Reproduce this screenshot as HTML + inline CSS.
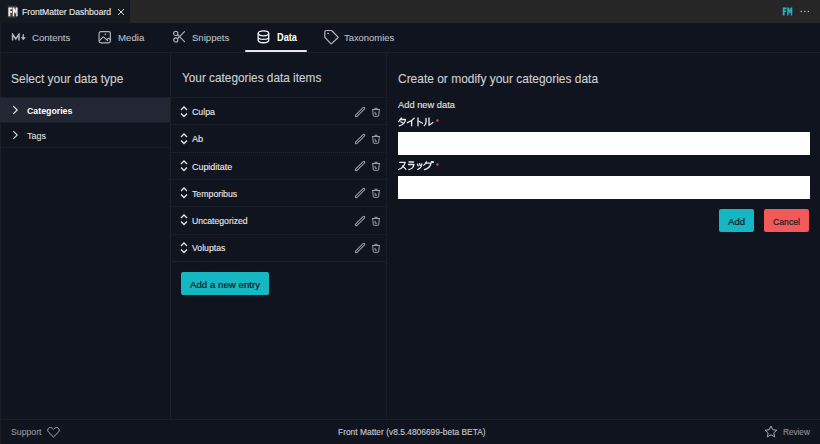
<!DOCTYPE html>
<html><head><meta charset="utf-8"><style>
html,body{margin:0;padding:0;}
body{width:820px;height:444px;background:#10141f;position:relative;overflow:hidden;font-family:"Liberation Sans",sans-serif;}
.t{position:absolute;white-space:nowrap;}
.r{position:absolute;}
</style></head><body>
<div class="r" style="left:0px;top:23px;width:1px;height:421px;background:#1b1d24;"></div>
<div class="r" style="left:0px;top:0px;width:820px;height:23px;background:#262626;"></div>
<div class="r" style="left:0px;top:0px;width:130px;height:23px;background:#14181f;"></div>
<svg class="r" style="left:7px;top:5px;" width="11" height="14" viewBox="0 0 11 14" fill="none"><rect x="0.8" y="0.8" width="9.4" height="12" fill="#3e3a3d"/><path d="M1.4 2.6H5.2V4.3H3.3V6.1H5V7.7H3.3V11.2H1.4Z M5.7 2.6H7.5L8.2 5.6L8.9 2.6H10.6V11.2H9.2V6.3L8.6 8.6H7.8L7.1 6.3V11.2H5.7Z" fill="#eeeeee"/></svg>
<svg class="r" style="left:117px;top:8px;" width="8" height="8" viewBox="0 0 8 8" fill="none"><path d="M1 1L7 7M7 1L1 7" stroke="#d6d6d6" stroke-width="1"/></svg>
<svg class="r" style="left:782px;top:7px;" width="11" height="9" viewBox="0 0 11 9" fill="none"><path d="M0.8 0.6H4.5V2.2H2.6V3.6H4.2V5.1H2.6V8.5H0.8Z M5.2 0.6H7L7.8 3.5L8.6 0.6H10.3V8.5H8.9V4.2L8.2 6.5H7.4L6.6 4.2V8.5H5.2Z" fill="#1bb6c2"/></svg>
<svg class="r" style="left:800px;top:10px;" width="10" height="3" viewBox="0 0 10 3" fill="none"><circle cx="1.3" cy="1.5" r="0.75" fill="#c0c0c0"/><circle cx="4.8" cy="1.5" r="0.75" fill="#c0c0c0"/><circle cx="8.3" cy="1.5" r="0.75" fill="#c0c0c0"/></svg>
<div class="r" style="left:0px;top:52px;width:820px;height:1px;background:#1c1f28;"></div>
<svg class="r" style="left:11px;top:33px;" width="16" height="9" viewBox="0 0 16 9" fill="none"><path d="M1.6 7.6V1.3L4.8 6L8 1.3V7.6" stroke="#b4b7bd" stroke-width="1.5" stroke-linejoin="miter"/><path d="M11.6 1.2H13V4.2H14.9L12.3 7.3L9.7 4.2H11.6Z" fill="#b4b7bd"/></svg>
<svg class="r" style="left:98px;top:30px;" width="14" height="14" viewBox="0 0 14 14" fill="none"><rect x="1.05" y="1.55" width="11.3" height="11.3" rx="1.8" stroke="#b4b7bd" stroke-width="1.15"/><path d="M1.5 10.6L4.9 7.1Q5.4 6.6 5.9 7.1L9.6 10.6M8.9 9.6L10.1 8.5Q10.6 8.1 11.1 8.5L12.4 9.7" stroke="#b4b7bd" stroke-width="1.1" stroke-linecap="round"/><circle cx="7.4" cy="4.3" r="0.85" fill="#b4b7bd"/></svg>
<svg class="r" style="left:172px;top:30px;" width="14" height="13" viewBox="0 0 14 13" fill="none"><circle cx="3.8" cy="3.4" r="2.1" stroke="#b4b7bd" stroke-width="1.1"/><circle cx="3.8" cy="10" r="2.1" stroke="#b4b7bd" stroke-width="1.1"/><path d="M5.5 4.7L12.5 11.7M5.5 8.7L12.5 1.7" stroke="#b4b7bd" stroke-width="1.1" stroke-linecap="round"/></svg>
<svg class="r" style="left:256px;top:29px;" width="15" height="16" viewBox="0 0 15 16" fill="none"><ellipse cx="7.45" cy="4.3" rx="5.3" ry="2.5" stroke="#f2f2f2" stroke-width="1.3"/><path d="M2.15 4.3V11.3A5.3 2.45 0 0 0 12.75 11.3V4.3M2.15 7.9A5.3 2.4 0 0 0 12.75 7.9" stroke="#f2f2f2" stroke-width="1.3"/></svg>
<div class="r" style="left:245px;top:50px;width:62px;height:2px;background:#e8e8e8;border-radius:1px"></div>
<svg class="r" style="left:323px;top:29px;" width="17" height="16" viewBox="0 0 17 16" fill="none"><path d="M1.8 3.3Q1.8 1.5 3.6 1.5H8.6L14.9 7.9Q15.3 8.3 14.9 8.7L8.6 14.6Q8.2 15 7.8 14.6L1.8 8.4Z" stroke="#b4b7bd" stroke-width="1.2" stroke-linejoin="round"/><path d="M4.6 4.4H5.6" stroke="#b4b7bd" stroke-width="1" stroke-linecap="round"/></svg>
<div class="r" style="left:170px;top:53px;width:1px;height:366px;background:#1c1f28;"></div>
<div class="r" style="left:386px;top:53px;width:1px;height:366px;background:repeating-linear-gradient(180deg,#23262f 0 1px,transparent 1px 2px);"></div>
<div class="r" style="left:0px;top:419px;width:820px;height:1px;background:#1c1f28;"></div>
<div class="r" style="left:0px;top:98px;width:170px;height:24px;background:#232734;"></div>
<div class="r" style="left:0px;top:97px;width:170px;height:1px;background:repeating-linear-gradient(90deg,#23262f 0 1px,transparent 1px 2px);"></div>
<div class="r" style="left:0px;top:122px;width:170px;height:1px;background:#1a1d27;"></div>
<div class="r" style="left:0px;top:147px;width:170px;height:1px;background:repeating-linear-gradient(90deg,#23262f 0 1px,transparent 1px 2px);"></div>
<svg class="r" style="left:12px;top:105px;" width="7" height="10" viewBox="0 0 7 10" fill="none"><path d="M1.3 1.1L5.2 5L1.3 8.9" stroke="#e6e6e6" stroke-width="1.2" fill="none"/></svg>
<svg class="r" style="left:12px;top:130px;" width="7" height="10" viewBox="0 0 7 10" fill="none"><path d="M1.3 1.1L5.2 5L1.3 8.9" stroke="#cfcfcf" stroke-width="1.2" fill="none"/></svg>
<div class="r" style="left:171px;top:97px;width:215px;height:1px;background:repeating-linear-gradient(90deg,#23262f 0 1px,transparent 1px 2px);"></div>
<svg class="r" style="left:180px;top:106px;" width="8" height="12" viewBox="0 0 8 12" fill="none"><path d="M1 4L4 1L7 4M1 7.5L4 10.5L7 7.5" stroke="#e6e6e6" stroke-width="1.3" fill="none"/></svg>
<svg class="r" style="left:354.2px;top:105.5px;" width="12" height="12" viewBox="0 0 12 12" fill="none"><path d="M2.3 9.7L9.8 2.3" stroke="#a3a6ad" stroke-width="3" stroke-linecap="round"/><path d="M2.4 9.6L9.7 2.4" stroke="#10141f" stroke-width="1.1" stroke-linecap="round"/></svg>
<svg class="r" style="left:371px;top:106.5px;" width="10" height="11" viewBox="0 0 10 11" fill="none"><path d="M3.5 2.3Q3.5 1.1 5 1.1Q6.5 1.1 6.5 2.3M1 2.5H9M1.7 2.5L2.3 8.7Q2.4 9.3 3.1 9.3H6.9Q7.6 9.3 7.7 8.7L8.3 2.5M4.1 4.8V7.2H6" stroke="#a3a6ad" stroke-width="0.95" fill="none" stroke-linejoin="round"/></svg>
<div class="r" style="left:171px;top:124px;width:215px;height:1px;background:repeating-linear-gradient(90deg,#23262f 0 1px,transparent 1px 2px);"></div>
<svg class="r" style="left:180px;top:133px;" width="8" height="12" viewBox="0 0 8 12" fill="none"><path d="M1 4L4 1L7 4M1 7.5L4 10.5L7 7.5" stroke="#e6e6e6" stroke-width="1.3" fill="none"/></svg>
<svg class="r" style="left:354.2px;top:132.75px;" width="12" height="12" viewBox="0 0 12 12" fill="none"><path d="M2.3 9.7L9.8 2.3" stroke="#a3a6ad" stroke-width="3" stroke-linecap="round"/><path d="M2.4 9.6L9.7 2.4" stroke="#10141f" stroke-width="1.1" stroke-linecap="round"/></svg>
<svg class="r" style="left:371px;top:133.75px;" width="10" height="11" viewBox="0 0 10 11" fill="none"><path d="M3.5 2.3Q3.5 1.1 5 1.1Q6.5 1.1 6.5 2.3M1 2.5H9M1.7 2.5L2.3 8.7Q2.4 9.3 3.1 9.3H6.9Q7.6 9.3 7.7 8.7L8.3 2.5M4.1 4.8V7.2H6" stroke="#a3a6ad" stroke-width="0.95" fill="none" stroke-linejoin="round"/></svg>
<div class="r" style="left:171px;top:152px;width:215px;height:1px;background:repeating-linear-gradient(90deg,#23262f 0 1px,transparent 1px 2px);"></div>
<svg class="r" style="left:180px;top:160px;" width="8" height="12" viewBox="0 0 8 12" fill="none"><path d="M1 4L4 1L7 4M1 7.5L4 10.5L7 7.5" stroke="#e6e6e6" stroke-width="1.3" fill="none"/></svg>
<svg class="r" style="left:354.2px;top:160.0px;" width="12" height="12" viewBox="0 0 12 12" fill="none"><path d="M2.3 9.7L9.8 2.3" stroke="#a3a6ad" stroke-width="3" stroke-linecap="round"/><path d="M2.4 9.6L9.7 2.4" stroke="#10141f" stroke-width="1.1" stroke-linecap="round"/></svg>
<svg class="r" style="left:371px;top:161.0px;" width="10" height="11" viewBox="0 0 10 11" fill="none"><path d="M3.5 2.3Q3.5 1.1 5 1.1Q6.5 1.1 6.5 2.3M1 2.5H9M1.7 2.5L2.3 8.7Q2.4 9.3 3.1 9.3H6.9Q7.6 9.3 7.7 8.7L8.3 2.5M4.1 4.8V7.2H6" stroke="#a3a6ad" stroke-width="0.95" fill="none" stroke-linejoin="round"/></svg>
<div class="r" style="left:171px;top:179px;width:215px;height:1px;background:repeating-linear-gradient(90deg,#23262f 0 1px,transparent 1px 2px);"></div>
<svg class="r" style="left:180px;top:187px;" width="8" height="12" viewBox="0 0 8 12" fill="none"><path d="M1 4L4 1L7 4M1 7.5L4 10.5L7 7.5" stroke="#e6e6e6" stroke-width="1.3" fill="none"/></svg>
<svg class="r" style="left:354.2px;top:187.25px;" width="12" height="12" viewBox="0 0 12 12" fill="none"><path d="M2.3 9.7L9.8 2.3" stroke="#a3a6ad" stroke-width="3" stroke-linecap="round"/><path d="M2.4 9.6L9.7 2.4" stroke="#10141f" stroke-width="1.1" stroke-linecap="round"/></svg>
<svg class="r" style="left:371px;top:188.25px;" width="10" height="11" viewBox="0 0 10 11" fill="none"><path d="M3.5 2.3Q3.5 1.1 5 1.1Q6.5 1.1 6.5 2.3M1 2.5H9M1.7 2.5L2.3 8.7Q2.4 9.3 3.1 9.3H6.9Q7.6 9.3 7.7 8.7L8.3 2.5M4.1 4.8V7.2H6" stroke="#a3a6ad" stroke-width="0.95" fill="none" stroke-linejoin="round"/></svg>
<div class="r" style="left:171px;top:206px;width:215px;height:1px;background:repeating-linear-gradient(90deg,#23262f 0 1px,transparent 1px 2px);"></div>
<svg class="r" style="left:180px;top:214px;" width="8" height="12" viewBox="0 0 8 12" fill="none"><path d="M1 4L4 1L7 4M1 7.5L4 10.5L7 7.5" stroke="#e6e6e6" stroke-width="1.3" fill="none"/></svg>
<svg class="r" style="left:354.2px;top:214.5px;" width="12" height="12" viewBox="0 0 12 12" fill="none"><path d="M2.3 9.7L9.8 2.3" stroke="#a3a6ad" stroke-width="3" stroke-linecap="round"/><path d="M2.4 9.6L9.7 2.4" stroke="#10141f" stroke-width="1.1" stroke-linecap="round"/></svg>
<svg class="r" style="left:371px;top:215.5px;" width="10" height="11" viewBox="0 0 10 11" fill="none"><path d="M3.5 2.3Q3.5 1.1 5 1.1Q6.5 1.1 6.5 2.3M1 2.5H9M1.7 2.5L2.3 8.7Q2.4 9.3 3.1 9.3H6.9Q7.6 9.3 7.7 8.7L8.3 2.5M4.1 4.8V7.2H6" stroke="#a3a6ad" stroke-width="0.95" fill="none" stroke-linejoin="round"/></svg>
<div class="r" style="left:171px;top:234px;width:215px;height:1px;background:repeating-linear-gradient(90deg,#23262f 0 1px,transparent 1px 2px);"></div>
<svg class="r" style="left:180px;top:242px;" width="8" height="12" viewBox="0 0 8 12" fill="none"><path d="M1 4L4 1L7 4M1 7.5L4 10.5L7 7.5" stroke="#e6e6e6" stroke-width="1.3" fill="none"/></svg>
<svg class="r" style="left:354.2px;top:241.75px;" width="12" height="12" viewBox="0 0 12 12" fill="none"><path d="M2.3 9.7L9.8 2.3" stroke="#a3a6ad" stroke-width="3" stroke-linecap="round"/><path d="M2.4 9.6L9.7 2.4" stroke="#10141f" stroke-width="1.1" stroke-linecap="round"/></svg>
<svg class="r" style="left:371px;top:242.75px;" width="10" height="11" viewBox="0 0 10 11" fill="none"><path d="M3.5 2.3Q3.5 1.1 5 1.1Q6.5 1.1 6.5 2.3M1 2.5H9M1.7 2.5L2.3 8.7Q2.4 9.3 3.1 9.3H6.9Q7.6 9.3 7.7 8.7L8.3 2.5M4.1 4.8V7.2H6" stroke="#a3a6ad" stroke-width="0.95" fill="none" stroke-linejoin="round"/></svg>
<div class="r" style="left:171px;top:261px;width:215px;height:1px;background:#1c1f28;"></div>
<div class="r" style="left:181px;top:272px;width:87.5px;height:22.6px;background:#15b7c3;border-radius:2px"></div>
<svg class="r" style="left:397px;top:117px;" width="38" height="10" viewBox="0 0 38 10" fill="none"><g stroke="#ebebeb" stroke-width="1.3" fill="none" stroke-linecap="round" stroke-linejoin="round">
<path d="M4.5 1L1.6 4.6"/><path d="M3.3 2.5H8.5C8 6 5.5 8 2.3 8.8"/><path d="M3.9 4.7L6.3 6.3"/>
<path d="M17.2 1.1C15.5 3.3 13 4.8 10.4 5.7"/><path d="M14.6 3.7V8.8"/>
<path d="M21 0.9V8.8"/><path d="M21.4 4L25.5 6.2"/>
<path d="M29 1.5V4.5C29 6.5 28.4 7.7 27.3 8.6"/><path d="M32 1V8.2C33.5 7.5 34.8 6.7 35.9 5.4"/>
</g></svg>
<svg class="r" style="left:435px;top:118px;" width="5" height="5" viewBox="0 0 5 5" fill="none"><circle cx="2.4" cy="2.5" r="1.25" fill="#c4504c"/></svg>
<div class="r" style="left:398px;top:132px;width:411.5px;height:22.6px;background:#ffffff;"></div>
<svg class="r" style="left:397px;top:161px;" width="38" height="10" viewBox="0 0 38 10" fill="none"><g stroke="#ebebeb" stroke-width="1.3" fill="none" stroke-linecap="round" stroke-linejoin="round">
<path d="M2.5 1.3H8.2C7.3 4.6 5 7.3 1.6 8.5"/><path d="M5.5 4.9C6.8 5.9 7.9 7 8.8 8.2"/>
<path d="M12 1H16.5"/><path d="M11.5 3.5H17C16.5 6.5 14.5 8 11.8 8.6"/>
<path d="M20.5 3.2L21.2 4.9"/><path d="M22.5 2.7L23.2 4.4"/><path d="M24.8 2.8C24.6 5.6 23.2 7.5 20.8 8.4"/>
<path d="M29.5 0.8C28.9 2.3 28 3.4 26.8 4.2"/><path d="M28.5 2.2H34C33.4 5.5 31 7.8 27.5 8.7"/><path d="M34.5 0.4L35 1.7M35.8 0.1L36.3 1.4"/>
</g></svg>
<svg class="r" style="left:435px;top:162px;" width="5" height="5" viewBox="0 0 5 5" fill="none"><circle cx="2.4" cy="2.5" r="1.25" fill="#c4504c"/></svg>
<div class="r" style="left:398px;top:176.3px;width:411.5px;height:22.6px;background:#ffffff;"></div>
<div class="r" style="left:718.8px;top:209.1px;width:35px;height:23px;background:#15b7c3;border-radius:2px"></div>
<div class="r" style="left:764px;top:209.1px;width:45.4px;height:23px;background:#f25a5a;border-radius:2px"></div>
<svg class="r" style="left:47px;top:427px;" width="13" height="11" viewBox="0 0 13 11" fill="none"><path d="M6.5 10L1.6 5.2C0.4 4 0.4 2.2 1.6 1.2C2.8 0.1 4.6 0.3 5.6 1.4L6.5 2.3L7.4 1.4C8.4 0.3 10.2 0.1 11.4 1.2C12.6 2.2 12.6 4 11.4 5.2Z" stroke="#a8abb2" stroke-width="1" fill="none" stroke-linejoin="round"/></svg>
<svg class="r" style="left:764px;top:425px;" width="14" height="13" viewBox="0 0 14 13" fill="none"><path d="M7 1L8.8 4.8L12.8 5.2L9.8 7.9L10.7 11.9L7 9.8L3.3 11.9L4.2 7.9L1.2 5.2L5.2 4.8Z" stroke="#a8abb2" stroke-width="1" fill="none" stroke-linejoin="round"/></svg>
<div class="t" style="left:21.64px;top:7.64px;font-size:8.7px;line-height:8.7px;color:#e8e8e8;font-weight:400;letter-spacing:0px;-webkit-text-stroke:0.12px #e8e8e8;transform-origin:0 0;transform:scaleX(0.9924);">FrontMatter Dashboard</div>
<div class="t" style="left:32.11px;top:32.52px;font-size:9.9px;line-height:9.9px;color:#b9bcc2;font-weight:400;letter-spacing:0px;-webkit-text-stroke:0.12px #b9bcc2;transform-origin:0 0;transform:scaleX(0.9656);">Contents</div>
<div class="t" style="left:117.99px;top:32.52px;font-size:9.9px;line-height:9.9px;color:#b9bcc2;font-weight:400;letter-spacing:0px;-webkit-text-stroke:0.12px #b9bcc2;transform-origin:0 0;transform:scaleX(0.9788);">Media</div>
<div class="t" style="left:191.85px;top:32.52px;font-size:9.9px;line-height:9.9px;color:#b9bcc2;font-weight:400;letter-spacing:0px;-webkit-text-stroke:0.12px #b9bcc2;transform-origin:0 0;transform:scaleX(0.9678);">Snippets</div>
<div class="t" style="left:276.59px;top:32.53px;font-size:10px;line-height:10px;color:#ffffff;font-weight:700;letter-spacing:0px;transform-origin:0 0;transform:scaleX(0.9212);">Data</div>
<div class="t" style="left:344.21px;top:32.62px;font-size:9.9px;line-height:9.9px;color:#b9bcc2;font-weight:400;letter-spacing:0px;-webkit-text-stroke:0.12px #b9bcc2;transform-origin:0 0;transform:scaleX(0.9516);">Taxonomies</div>
<div class="t" style="left:10.73px;top:73.53px;font-size:11.9px;line-height:11.9px;color:#cdced1;font-weight:400;letter-spacing:0px;-webkit-text-stroke:0.12px #cdced1;transform-origin:0 0;transform:scaleX(1.0060);">Select your data type</div>
<div class="t" style="left:181.84px;top:73.43px;font-size:11.9px;line-height:11.9px;color:#cdced1;font-weight:400;letter-spacing:0px;-webkit-text-stroke:0.12px #cdced1;transform-origin:0 0;transform:scaleX(0.9924);">Your categories data items</div>
<div class="t" style="left:397.56px;top:73.63px;font-size:11.9px;line-height:11.9px;color:#cdced1;font-weight:400;letter-spacing:0px;-webkit-text-stroke:0.12px #cdced1;transform-origin:0 0;transform:scaleX(1.0056);">Create or modify your categories data</div>
<div class="t" style="left:26.59px;top:106.73px;font-size:9.3px;line-height:9.3px;color:#ffffff;font-weight:700;letter-spacing:0px;transform-origin:0 0;transform:scaleX(0.9447);">Categories</div>
<div class="t" style="left:26.63px;top:130.96px;font-size:9.5px;line-height:9.5px;color:#dcdcdc;font-weight:400;letter-spacing:0px;-webkit-text-stroke:0.12px #dcdcdc;transform-origin:0 0;transform:scaleX(0.9537);">Tags</div>
<div class="t" style="left:191.78px;top:108.23px;font-size:9.3px;line-height:9.3px;color:#e8e8e8;font-weight:400;letter-spacing:0px;-webkit-text-stroke:0.12px #e8e8e8;transform-origin:0 0;transform:scaleX(0.9415);">Culpa</div>
<div class="t" style="left:191.69px;top:135.48px;font-size:9.3px;line-height:9.3px;color:#e8e8e8;font-weight:400;letter-spacing:0px;-webkit-text-stroke:0.12px #e8e8e8;transform-origin:0 0;transform:scaleX(0.9841);">Ab</div>
<div class="t" style="left:191.57px;top:162.73px;font-size:9.3px;line-height:9.3px;color:#e8e8e8;font-weight:400;letter-spacing:0px;-webkit-text-stroke:0.12px #e8e8e8;transform-origin:0 0;transform:scaleX(0.9592);">Cupiditate</div>
<div class="t" style="left:191.7px;top:189.98px;font-size:9.3px;line-height:9.3px;color:#e8e8e8;font-weight:400;letter-spacing:0px;-webkit-text-stroke:0.12px #e8e8e8;transform-origin:0 0;transform:scaleX(0.9412);">Temporibus</div>
<div class="t" style="left:191.83px;top:217.23px;font-size:9.3px;line-height:9.3px;color:#e8e8e8;font-weight:400;letter-spacing:0px;-webkit-text-stroke:0.12px #e8e8e8;transform-origin:0 0;transform:scaleX(0.9267);">Uncategorized</div>
<div class="t" style="left:191.62px;top:244.48px;font-size:9.3px;line-height:9.3px;color:#e8e8e8;font-weight:400;letter-spacing:0px;-webkit-text-stroke:0.12px #e8e8e8;transform-origin:0 0;transform:scaleX(0.9340);">Voluptas</div>
<div class="t" style="left:397.69px;top:101.00px;font-size:9.1px;line-height:9.1px;color:#e2e2e2;font-weight:400;letter-spacing:0px;-webkit-text-stroke:0.12px #e2e2e2;transform-origin:0 0;transform:scaleX(1.0235);">Add new data</div>
<div class="t" style="left:189.51px;top:279.67px;font-size:9.6px;line-height:9.6px;color:#101822;font-weight:400;letter-spacing:0px;-webkit-text-stroke:0.2px #101822;transform-origin:0 0;transform:scaleX(1.0101);">Add a new entry</div>
<div class="t" style="left:727.92px;top:217.00px;font-size:9.8px;line-height:9.8px;color:#101822;font-weight:400;letter-spacing:0px;-webkit-text-stroke:0.2px #101822;transform-origin:0 0;transform:scaleX(0.9765);">Add</div>
<div class="t" style="left:773.13px;top:216.80px;font-size:9.8px;line-height:9.8px;color:#231c20;font-weight:400;letter-spacing:0px;-webkit-text-stroke:0.2px #231c20;transform-origin:0 0;transform:scaleX(0.8859);">Cancel</div>
<div class="t" style="left:10.76px;top:427.54px;font-size:8.7px;line-height:8.7px;color:#8f9299;font-weight:400;letter-spacing:0px;-webkit-text-stroke:0.12px #8f9299;transform-origin:0 0;transform:scaleX(1.0029);">Support</div>
<div class="t" style="left:338.38px;top:427.94px;font-size:8.7px;line-height:8.7px;color:#c6c8cc;font-weight:400;letter-spacing:0px;-webkit-text-stroke:0.12px #c6c8cc;transform-origin:0 0;transform:scaleX(0.9687);">Front Matter (v8.5.4806699-beta BETA)</div>
<div class="t" style="left:782.5px;top:427.74px;font-size:8.7px;line-height:8.7px;color:#8f9299;font-weight:400;letter-spacing:0px;-webkit-text-stroke:0.12px #8f9299;transform-origin:0 0;transform:scaleX(0.9399);">Review</div>
</body></html>
